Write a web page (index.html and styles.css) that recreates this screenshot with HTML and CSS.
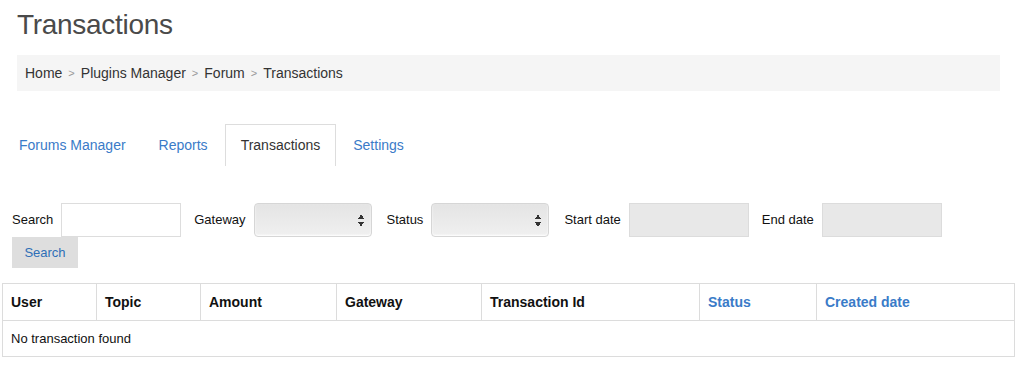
FILE: index.html
```html
<!DOCTYPE html>
<html lang="en">
<head>
    <meta charset="UTF-8">
    <title>Transactions</title>
    <link rel="stylesheet" href="styles.css">
</head>
<body>
    <h1 class="page-title">Transactions</h1>
    <ol class="breadcrumb">
        <li>Home</li>
        <li>Plugins Manager</li>
        <li>Forum</li>
        <li>Transactions</li>
    </ol>

    <ul class="tabs">
        <li><a href="#">Forums Manager</a></li>
        <li><a href="#">Reports</a></li>
        <li class="active"><a href="#">Transactions</a></li>
        <li><a href="#">Settings</a></li>
    </ul>

    <form class="filters">
        <label>Search <input type="text" class="field"></label>
        <label>Gateway <span class="select"></span></label>
        <label>Status <span class="select"></span></label>
        <label>Start date <input type="text" class="field date" readonly></label>
        <label>End date <input type="text" class="field date" readonly></label>
        <button type="button" class="btn">Search</button>
    </form>

    <table class="grid">
        <thead>
            <tr>
                <th class="c-user">User</th>
                <th class="c-topic">Topic</th>
                <th class="c-amount">Amount</th>
                <th class="c-gateway">Gateway</th>
                <th class="c-tid">Transaction Id</th>
                <th class="c-status sortable">Status</th>
                <th class="sortable">Created date</th>
            </tr>
        </thead>
        <tbody>
            <tr><td colspan="7">No transaction found</td></tr>
        </tbody>
    </table>
</body>
</html>
```

FILE: styles.css
```css
body { margin: 0; font-family: "Liberation Sans", Arial, sans-serif; color: #333; background: #fff; }

.page-title { margin: 0; padding: 9px 0 0 17px; height: 55px; box-sizing: border-box; font-size: 28px; font-weight: normal; color: #4a4a4a; letter-spacing: -0.3px; }

.breadcrumb { list-style: none; margin: 0 18px 0 17px; padding: 0 8px; height: 36px; display: flex; align-items: center; background: #f5f5f5; font-size: 14px; color: #333; }
.breadcrumb li + li::before { content: ">"; color: #999; font-size: 11px; padding: 0 6px; position: relative; top: -1px; }

.tabs { list-style: none; margin: 33px 0 0 3px; padding: 0; display: flex; height: 42px; }
.tabs li { margin-right: 1px; }
.tabs a { display: block; padding: 12px 15px 0; height: 42px; box-sizing: border-box; font-size: 14px; color: #3a7bc8; text-decoration: none; border: 1px solid transparent; border-bottom: 0; }
.tabs .active a { color: #333; border-color: #ddd; }

.filters { display: flex; flex-wrap: wrap; align-items: center; margin: 37px 0 0 12px; width: 950px; font-size: 13px; color: #111; }
.filters label { display: flex; align-items: center; margin-right: 13px; padding-bottom: 2px; }
.field { width: 120px; height: 34px; box-sizing: border-box; margin: 0 0 -2px 8px; border: 1px solid #ddd; background: #fff; font: inherit; }
.field.date { background: #e8e8e8; border-color: #dcdcdc; }
.select { display: block; width: 118px; height: 34px; box-sizing: border-box; margin: 0 2px -2px 8px; border: 1px solid #d6d6d6; border-radius: 4px; background: linear-gradient(#e4e4e4, #f0f0f0); box-shadow: inset 0 -1px 2px #fff; position: relative; }
.select::after { content: ""; position: absolute; right: 7px; top: 10px; width: 6px; height: 13px; background:
    linear-gradient(to bottom right, transparent 50%, #333 50%) 0 0 / 3px 5px no-repeat,
    linear-gradient(to bottom left, transparent 50%, #333 50%) 3px 0 / 3px 5px no-repeat,
    linear-gradient(to top right, transparent 50%, #333 50%) 0 8px / 3px 5px no-repeat,
    linear-gradient(to top left, transparent 50%, #333 50%) 3px 8px / 3px 5px no-repeat; }
.btn { width: 66px; height: 31px; border: 0; background: #dedede; color: #2f6fb7; font: inherit; font-size: 13px; padding: 0; }

.grid { margin: 15px 0 0 2px; width: 1013px; border-collapse: collapse; font-size: 13px; color: #111; }
.grid th, .grid td { border: 1px solid #dcdcdc; text-align: left; padding: 0 8px; }
.grid th { height: 36px; font-size: 14px; font-weight: bold; }
.grid td { height: 35px; }
.grid .sortable { color: #3a7bc8; }
.c-user { width: 77px; }
.c-topic { width: 87px; }
.c-amount { width: 119px; }
.c-gateway { width: 128px; }
.c-tid { width: 201px; }
.c-status { width: 100px; }
```
